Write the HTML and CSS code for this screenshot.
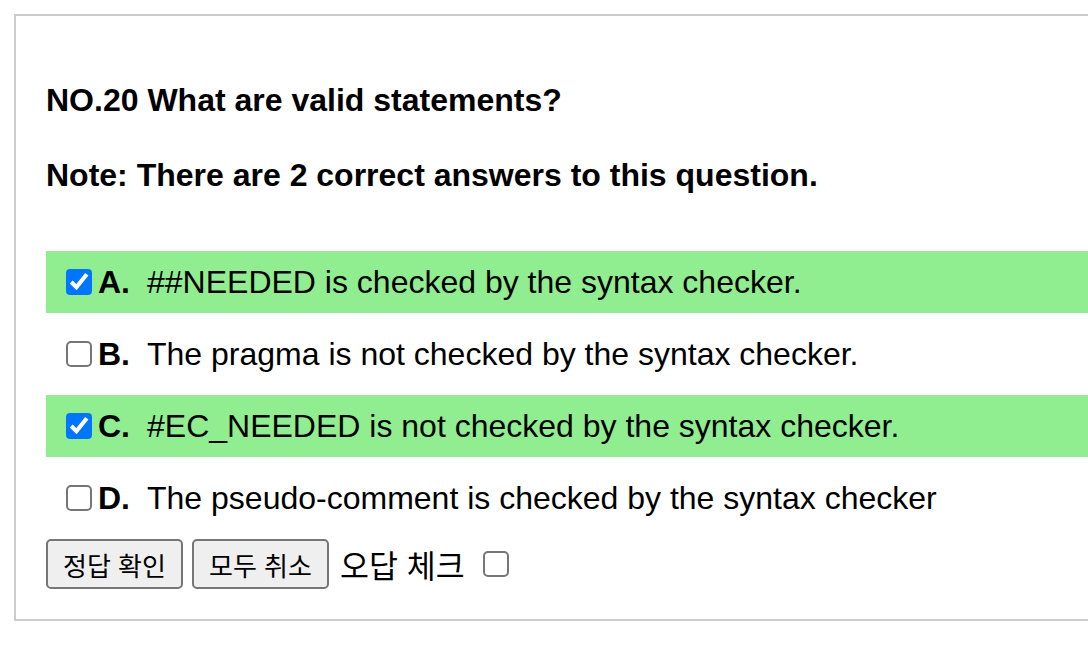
FILE: index.html
```html
<!DOCTYPE html>
<html lang="ko">

<head>
    <meta charset="UTF-8">
    <meta name="viewport" content="width=device-width, initial-scale=1.0">
    <title>NO.20</title>
    <link rel="stylesheet" href="styles.css">
</head>

<body>
    <div class="quiz">
        <!-- 문제 -->
        <p class="title">NO.20 What are valid statements?</p>
        <p class="note">Note: There are 2 correct answers to this question.</p>

        <!-- 보기 -->
        <ul class="options">
            <li class="opt correct">
                <input type="checkbox" checked>
                <b class="mark">A.</b>
                <span>##NEEDED is checked by the syntax checker.</span>
            </li>
            <li class="opt">
                <input type="checkbox">
                <b class="mark">B.</b>
                <span>The pragma is not checked by the syntax checker.</span>
            </li>
            <li class="opt correct">
                <input type="checkbox" checked>
                <b class="mark">C.</b>
                <span>#EC_NEEDED is not checked by the syntax checker.</span>
            </li>
            <li class="opt">
                <input type="checkbox">
                <b class="mark">D.</b>
                <span>The pseudo-comment is checked by the syntax checker</span>
            </li>
        </ul>

        <!-- 버튼 -->
        <div class="actions">
            <button class="btn">정답 확인</button>
            <button class="btn">모두 취소</button>
            <span class="wrong">오답 체크</span>
            <input type="checkbox" class="wrong-check">
        </div>
    </div>
</body>

</html>
```

FILE: styles.css
```css
* {
    margin: 0;
    padding: 0;
}

body {
    overflow: hidden;
    font-family: Arial, "Liberation Sans", "Noto Sans CJK KR", sans-serif;
    color: #000;
    background: #fff;
}

.quiz {
    width: 1120px;
    margin: 14px 0 0 14px;
    padding: 66px 30px 30px;
    border: 2px solid #ccc;
}

.title,
.note {
    font-size: 32px;
    font-weight: bold;
    line-height: 37px;
}

.note {
    margin-top: 38px;
}

.options {
    list-style: none;
    margin-top: 57px;
}

.opt {
    display: flex;
    align-items: center;
    height: 62px;
    margin-bottom: 10px;
    padding-left: 20px;
    font-size: 32px;
}

/* 체크박스 2배 크기 */
.opt input,
.wrong-check {
    zoom: 2;
    width: 13px;
    height: 13px;
    accent-color: #0075ff;
}

.opt input {
    margin: 0 3px 0 0;
}

.mark {
    width: 49px;
}

.correct {
    background-color: lightgreen;
}

.actions {
    display: flex;
    align-items: center;
    gap: 9px;
}

.btn {
    height: 50px;
    padding: 0 15px;
    font-family: "Noto Sans CJK KR", sans-serif;
    font-size: 26px;
    background-color: #efefef;
    border: 2px solid #767676;
    border-radius: 5px;
    color: #000;
}

.wrong {
    margin-left: 2px;
    font-family: "Noto Sans CJK KR", sans-serif;
    font-size: 31.5px;
}

.wrong-check {
    margin: 0 0 0 4.5px;
}
```
